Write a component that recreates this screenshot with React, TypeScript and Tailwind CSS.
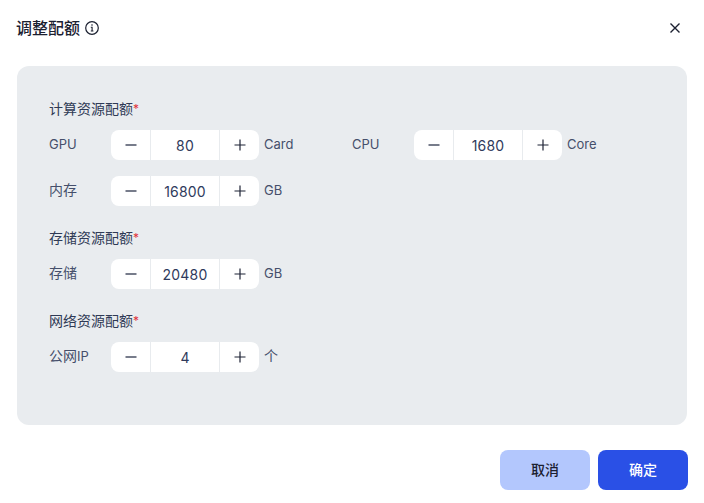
import React from "react";

function Stepper({ value }: { value: string }) {
  return (
    <div className="flex h-[30px] w-[148px] shrink-0 items-stretch overflow-hidden rounded-lg bg-white">
      <div className="flex w-[40px] items-center justify-center border-r border-[#e8ebee]">
        <svg width="14" height="14" viewBox="0 0 14 14"><path d="M1.5 7h11" stroke="#4a5165" strokeWidth="1.3" /></svg>
      </div>
      <div className="flex flex-1 items-center justify-center pt-[2px] text-sm tracking-[0.2px] text-[#2f3a5c]">{value}</div>
      <div className="flex w-[40px] items-center justify-center border-l border-[#e8ebee]">
        <svg width="14" height="14" viewBox="0 0 14 14"><path d="M1.5 7h11M7 1.5v11" stroke="#1d2235" strokeWidth="1.2" /></svg>
      </div>
    </div>
  );
}

function Field({ label, value, unit, className = "" }: { label: React.ReactNode; value: string; unit: React.ReactNode; className?: string }) {
  return (
    <div className={`flex items-center ${className}`}>
      <span className="w-[62px] shrink-0 pb-[2px] text-[13px] leading-5 text-[#454f6b]">{label}</span>
      <Stepper value={value} />
      <span className="ml-[5px] pb-[2px] text-[13px] leading-5 text-[#454f6b]">{unit}</span>
    </div>
  );
}

function Heading({ children }: { children: React.ReactNode }) {
  return (
    <div className="flex h-[20px] items-center text-sm text-[#2f3a55]">
      {children}
      <span className="text-xs text-[#e0343c]">*</span>
    </div>
  );
}

const Cjk = ({ children }: { children: React.ReactNode }) => <span className="text-sm">{children}</span>;

export default function App() {
  return (
    <div className="relative h-[503px] w-[704px] overflow-hidden bg-white font-['Inter','Noto_Sans_CJK_SC',sans-serif]">
      <div className="flex h-[56px] items-center justify-between pl-4 pr-[21px]">
        <div className="flex items-center gap-[4px]">
          <span className="text-base font-medium text-[#1b2030]">调整配额</span>
          <svg width="16" height="16" viewBox="0 0 16 16" fill="none" stroke="#1b2030">
            <circle cx="8" cy="8" r="6.3" strokeWidth="1.2" />
            <path d="M6.8 7.2H8.1V11M6.8 11h2.6" strokeWidth="1.1" />
            <circle cx="8" cy="5" r="0.8" fill="#1b2030" stroke="none" />
          </svg>
        </div>
        <svg width="16" height="16" viewBox="0 0 16 16" fill="none" stroke="#1b2030" strokeWidth="1.4">
          <path d="M3.5 3.5l9 9M12.5 3.5l-9 9" />
        </svg>
      </div>

      <div className="mx-[17px] mt-[10px] h-[359px] rounded-xl bg-[#e9ecef] pl-[32px] pt-[33px]">
        <Heading>计算资源配额</Heading>
        <div className="mt-[11px] flex">
          <Field label="GPU" value="80" unit="Card" className="w-[303px]" />
          <Field label="CPU" value="1680" unit="Core" />
        </div>
        <Field label={<Cjk>内存</Cjk>} value="16800" unit="GB" className="mt-4" />
        <div className="mt-[22px]"><Heading>存储资源配额</Heading></div>
        <Field label={<Cjk>存储</Cjk>} value="20480" unit="GB" className="mt-[11px]" />
        <div className="mt-[22px]"><Heading>网络资源配额</Heading></div>
        <Field label={<><Cjk>公网</Cjk>IP</>} value="4" unit={<Cjk>个</Cjk>} className="mt-[11px]" />
      </div>

      <div className="mt-[25px] flex justify-end gap-2 pr-4">
        <button className="h-10 w-[90px] rounded-lg bg-[#b3c7fd] text-sm font-medium text-[#1b2030]">取消</button>
        <button className="h-10 w-[90px] rounded-lg bg-[#2a50e6] text-sm font-medium text-white">确定</button>
      </div>
    </div>
  );
}
